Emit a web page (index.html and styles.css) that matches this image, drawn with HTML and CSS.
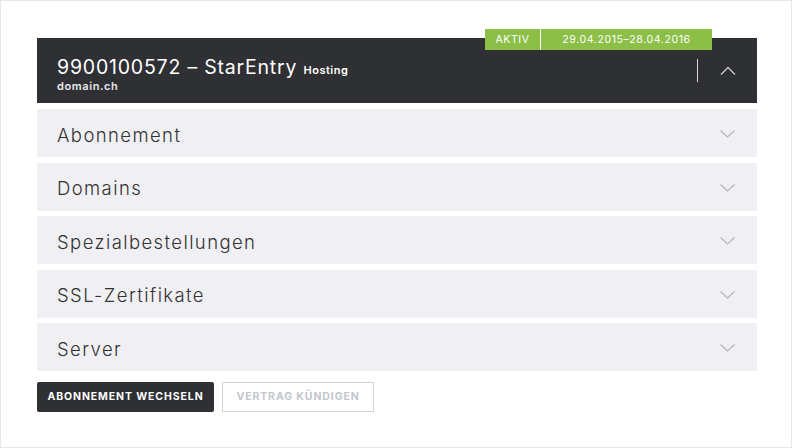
FILE: index.html
```html
<!DOCTYPE html>
<html lang="de">
<head>
    <meta charset="UTF-8">
    <meta name="viewport" content="width=device-width, initial-scale=1.0">
    <title>Vertrag</title>
    <link rel="stylesheet" href="styles.css">
</head>
<body>
    <div class="page">
        <div class="contract">
            <div class="status">
                <span class="status-label">AKTIV</span>
                <span class="status-date">29.04.2015–28.04.2016</span>
            </div>
            <div class="contract-head">
                <div class="contract-title">
                    <h2>9900100572 – StarEntry <small>Hosting</small></h2>
                    <p>domain.ch</p>
                </div>
                <div class="contract-toggle">
                    <span class="divider"></span>
                    <svg class="chevron" width="16" height="9" viewBox="0 0 16 9">
                        <polyline points="1,8.5 8,1.5 15,8.5" fill="none" stroke="#c9cacd" stroke-width="1.3"/>
                    </svg>
                </div>
            </div>
            <div class="sections">
                <div class="section">
                    <span>Abonnement</span>
                    <svg class="chevron" width="15" height="8" viewBox="0 0 15 8">
                        <polyline points="0.5,0.5 7.5,7 14.5,0.5" fill="none" stroke="#b4b5ba" stroke-width="1.2"/>
                    </svg>
                </div>
                <div class="section">
                    <span>Domains</span>
                    <svg class="chevron" width="15" height="8" viewBox="0 0 15 8">
                        <polyline points="0.5,0.5 7.5,7 14.5,0.5" fill="none" stroke="#b4b5ba" stroke-width="1.2"/>
                    </svg>
                </div>
                <div class="section">
                    <span>Spezialbestellungen</span>
                    <svg class="chevron" width="15" height="8" viewBox="0 0 15 8">
                        <polyline points="0.5,0.5 7.5,7 14.5,0.5" fill="none" stroke="#b4b5ba" stroke-width="1.2"/>
                    </svg>
                </div>
                <div class="section">
                    <span>SSL-Zertifikate</span>
                    <svg class="chevron" width="15" height="8" viewBox="0 0 15 8">
                        <polyline points="0.5,0.5 7.5,7 14.5,0.5" fill="none" stroke="#b4b5ba" stroke-width="1.2"/>
                    </svg>
                </div>
                <div class="section">
                    <span>Server</span>
                    <svg class="chevron" width="15" height="8" viewBox="0 0 15 8">
                        <polyline points="0.5,0.5 7.5,7 14.5,0.5" fill="none" stroke="#b4b5ba" stroke-width="1.2"/>
                    </svg>
                </div>
            </div>
            <div class="actions">
                <button class="btn btn-dark">ABONNEMENT WECHSELN</button>
                <button class="btn btn-light">VERTRAG KÜNDIGEN</button>
            </div>
        </div>
    </div>
</body>
</html>
```

FILE: styles.css
```css
* {
    padding: 0;
    margin: 0;
    box-sizing: border-box;
}
body {
    font-family: Inter, "Open Sans", Arial, sans-serif;
    background-color: #fff;
    color: #333;
}
.page {
    width: 792px;
    height: 448px;
    border: 1px solid #e6e6e8;
    padding: 37px 34px 0 36px;
}
.contract {
    position: relative;
}
.status {
    position: absolute;
    top: -9px;
    left: 448px;
    display: flex;
    height: 21px;
    z-index: 1;
}
.status span {
    background-color: #8cbf48;
    color: #fff;
    font-size: 10.5px;
    letter-spacing: 0.6px;
    line-height: 21px;
    text-align: center;
}
.status-label {
    width: 56px;
    border-right: 1px solid #fff;
}
.status-date {
    width: 171px;
}
.contract-head {
    height: 65px;
    background-color: #2f3034;
    color: #fff;
    display: flex;
    justify-content: space-between;
    align-items: center;
    padding: 7px 21px 0 20px;
}
.contract-title h2 {
    font-size: 19.5px;
    font-weight: 400;
    letter-spacing: 0.8px;
    line-height: 20px;
}
.contract-title small {
    font-size: 11px;
    font-weight: 600;
    letter-spacing: 0.5px;
}
.contract-title p {
    font-size: 11px;
    font-weight: 600;
    letter-spacing: 0.6px;
    line-height: 12px;
    color: #e8e8ea;
}
.contract-toggle {
    display: flex;
    align-items: center;
    gap: 22px;
    margin-top: -7px;
}
.divider {
    width: 1px;
    height: 23px;
    background-color: #d6d6d8;
}
.sections {
    padding-top: 6px;
}
.section {
    height: 48px;
    margin-bottom: 5.5px;
    background-color: #f0f0f4;
    display: flex;
    justify-content: space-between;
    align-items: center;
    padding: 3px 22px 0 20px;
    font-size: 18.5px;
    font-weight: 300;
    letter-spacing: 1.4px;
    color: #333;
}
.section .chevron {
    margin-top: -1px;
}
.actions {
    display: flex;
    gap: 8px;
    padding-top: 5px;
}
.btn {
    height: 30px;
    font-family: Inter, Arial, sans-serif;
    font-size: 10.5px;
    font-weight: 700;
    letter-spacing: 0.9px;
    cursor: pointer;
}
.btn-dark {
    width: 177px;
    background-color: #2f3034;
    color: #fff;
    border: none;
    border-radius: 2px;
}
.btn-light {
    width: 152px;
    background-color: #fff;
    color: #c3c6ce;
    border: 1px solid #d4d4d8;
}
```
